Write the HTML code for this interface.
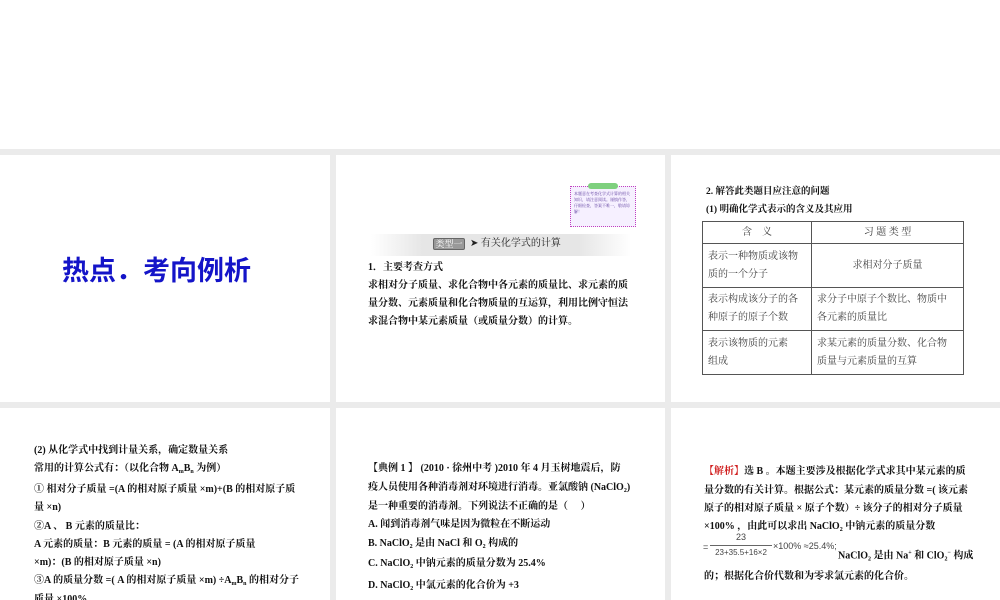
<!DOCTYPE html>
<html><head><meta charset="utf-8"><style>
*{margin:0;padding:0;box-sizing:border-box}
body{width:1000px;height:600px;background:#ebebeb;position:relative;overflow:hidden;font-family:"Liberation Serif","Noto Serif CJK SC","Noto Sans CJK SC",serif;color:#111}
.p{position:absolute;background:#fff;overflow:hidden}
.a{position:absolute;white-space:nowrap}
.t{font-size:10px;line-height:18px;font-weight:bold}
.b{font-weight:bold}
sub{font-size:6px;vertical-align:-2px}
sup{font-size:6px}
table{border-collapse:collapse;font-size:10px;color:#444}
td{border:1px solid #555;padding:0 5px;line-height:18px}
.f{font-family:"Liberation Sans",sans-serif;font-size:9px;line-height:10px;color:#444}
</style></head><body>
<div class="p" style="left:0;top:0;width:1000px;height:149px"></div>
<div class="p" style="left:0;top:155px;width:330px;height:247px">
 <div class="a" style="left:62px;top:94px;font-size:27px;font-weight:bold;color:#1414c8;font-family:'Liberation Sans','Noto Sans CJK SC',sans-serif;letter-spacing:0">热点．考向例析</div>
</div>
<div class="p" style="left:336px;top:155px;width:329px;height:247px">
 <div class="a" style="left:234px;top:31px;width:66px;height:41px;border:1px dotted #c040c0;background:#f6f0ff"></div>
 <div class="a" style="left:252px;top:28px;width:30px;height:6px;background:#7ed07e;border-radius:3px"></div>
 <div class="a" style="left:238px;top:36px;font-size:4px;line-height:6px;color:#6040a0;white-space:normal;width:58px">本题意在考查化学式计算的相关知识，请注意阅读。谨慎作答，仔细检查，答案不唯一，敬请谅解！</div>
 <div class="a" style="left:35px;top:79px;width:260px;height:22px;background:linear-gradient(90deg,#fff,#e6e6e6 20%,#e6e6e6 80%,#fff)"></div>
 <div class="a" style="left:97px;top:83px;width:32px;height:12px;background:#999;border:1px solid #666;border-radius:2px;font-size:9px;color:#fff;line-height:11px;text-align:center">类型一</div>
 <div class="a" style="left:134px;top:80px;color:#222;font-size:10px;line-height:18px">➤ 有关化学式的计算</div>
 <div class="a t" style="left:32px;top:104px">1．主要考查方式</div>
 <div class="a t" style="left:32px;top:122px">求相对分子质量、求化合物中各元素的质量比、求元素的质</div>
 <div class="a t" style="left:32px;top:140px">量分数、元素质量和化合物质量的互运算，利用比例守恒法</div>
 <div class="a t" style="left:32px;top:158px">求混合物中某元素质量（或质量分数）的计算。</div>
</div>
<div class="p" style="left:671px;top:155px;width:329px;height:247px">
 <div class="a t b" style="left:35px;top:28px;font-size:9.5px">2. 解答此类题目应注意的问题</div>
 <div class="a t b" style="left:35px;top:46px;font-size:9.5px">(1) 明确化学式表示的含义及其应用</div>
 <table class="a" style="left:31px;top:66px;width:262px">
  <tr style="height:22px"><td style="width:109px;text-align:center">含　义</td><td style="text-align:center">习 题 类 型</td></tr>
  <tr style="height:44px"><td>表示一种物质或该物<br>质的一个分子</td><td style="text-align:center">求相对分子质量</td></tr>
  <tr style="height:43px"><td>表示构成该分子的各<br>种原子的原子个数</td><td>求分子中原子个数比、物质中<br>各元素的质量比</td></tr>
  <tr style="height:44px"><td>表示该物质的元素<br>组成</td><td>求某元素的质量分数、化合物<br>质量与元素质量的互算</td></tr>
 </table>
</div>
<div class="p" style="left:0;top:408px;width:330px;height:192px">
 <div class="a t" style="left:34px;top:34px">(2) 从化学式中找到计量关系，确定数量关系</div>
 <div class="a t" style="left:34px;top:52px">常用的计算公式有：（以化合物 A<sub>m</sub>B<sub>n</sub> 为例）</div>
 <div class="a t" style="left:34px;top:73px">① 相对分子质量 =(A 的相对原子质量 ×m)+(B 的相对原子质</div>
 <div class="a t" style="left:34px;top:91px">量 ×n)</div>
 <div class="a t" style="left:34px;top:110px">②A 、 B 元素的质量比：</div>
 <div class="a t" style="left:34px;top:128px">A 元素的质量：B 元素的质量 = (A 的相对原子质量</div>
 <div class="a t" style="left:34px;top:146px">×m)：(B 的相对原子质量 ×n)</div>
 <div class="a t" style="left:34px;top:164px">③A 的质量分数 =( A 的相对原子质量 ×m) ÷A<sub>m</sub>B<sub>n</sub> 的相对分子</div>
 <div class="a t" style="left:34px;top:183px">质量 ×100%</div>
</div>
<div class="p" style="left:336px;top:408px;width:329px;height:192px">
 <div class="a t" style="left:32px;top:52px">【典例 1 】 (2010 · 徐州中考 )2010 年 4 月玉树地震后，防</div>
 <div class="a t" style="left:32px;top:71px">疫人员使用各种消毒剂对环境进行消毒。亚氯酸钠 (NaClO<sub>2</sub>)</div>
 <div class="a t" style="left:32px;top:90px">是一种重要的消毒剂。下列说法不正确的是（　 ）</div>
 <div class="a t" style="left:32px;top:108px">A. 闻到消毒剂气味是因为微粒在不断运动</div>
 <div class="a t" style="left:32px;top:127px">B. NaClO<sub>2</sub> 是由 NaCl 和 O<sub>2</sub> 构成的</div>
 <div class="a t" style="left:32px;top:147px">C. NaClO<sub>2</sub> 中钠元素的质量分数为 25.4%</div>
 <div class="a t" style="left:32px;top:169px">D. NaClO<sub>2</sub> 中氯元素的化合价为 +3</div>
</div>
<div class="p" style="left:671px;top:408px;width:329px;height:192px">
 <div class="a t" style="left:33px;top:55px"><span style="color:#d02020;font-weight:bold">【解析】</span>选 B 。本题主要涉及根据化学式求其中某元素的质</div>
 <div class="a t" style="left:33px;top:74px">量分数的有关计算。根据公式：某元素的质量分数 =( 该元素</div>
 <div class="a t" style="left:33px;top:92px">原子的相对原子质量 × 原子个数）÷ 该分子的相对分子质量</div>
 <div class="a t" style="left:33px;top:110px">×100% ，由此可以求出 NaClO<sub>2</sub> 中钠元素的质量分数</div>
 <div class="a f" style="left:32px;top:134px">=</div>
 <div class="a f" style="left:39px;top:124px;width:62px;text-align:center">23</div>
 <div class="a" style="left:39px;top:137px;width:62px;border-top:1px solid #666"></div>
 <div class="a f" style="left:39px;top:140px;width:62px;text-align:center;font-size:8px">23+35.5+16×2</div>
 <div class="a f" style="left:102px;top:133px">×100% ≈25.4%;</div>
 <div class="a t" style="left:167px;top:136px">NaClO<sub>2</sub> 是由 Na<sup>+</sup> 和 ClO<sub>2</sub><sup>−</sup> 构成</div>
 <div class="a t" style="left:33px;top:160px">的；根据化合价代数和为零求氯元素的化合价。</div>
</div>
</body></html>
